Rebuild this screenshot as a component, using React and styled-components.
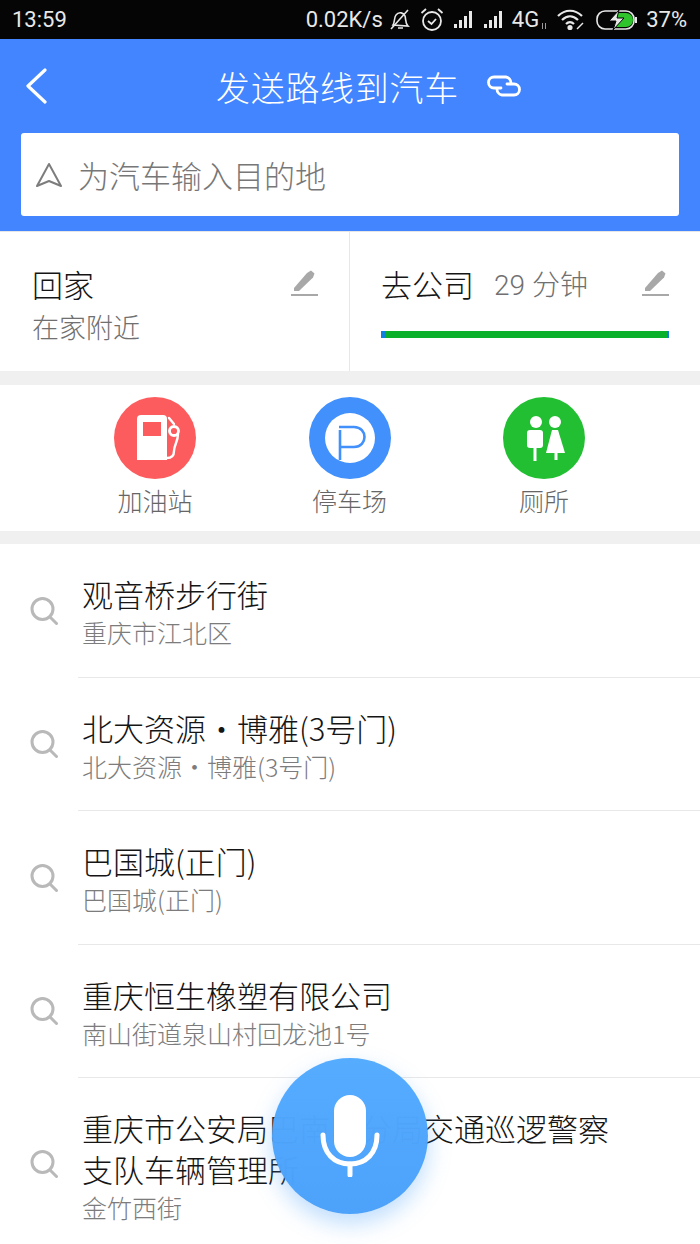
import React from 'react';
import styled, { createGlobalStyle } from 'styled-components';

const GlobalStyle = createGlobalStyle`
  html, body { margin: 0; padding: 0; background: #fff; }
  body { font-family: "Noto Sans CJK SC", "Noto Sans", sans-serif; }
`;

const Screen = styled.div`
  position: relative;
  width: 700px;
  height: 1244px;
  overflow: hidden;
  background: #fff;
`;

const StatusBar = styled.div`
  height: 39px;
  background: #050505;
  color: #e8e8e8;
  display: flex;
  align-items: center;
  justify-content: space-between;
  padding: 0 13px 0 12px;
  font-family: Roboto, sans-serif;
  font-size: 22px;
`;

const StatusRight = styled.div`
  display: flex;
  align-items: center;
`;

const StatusItem = styled.span`
  display: flex;
  align-items: center;
  margin-left: ${p => p.$ml || 0}px;
`;

const Header = styled.div`
  height: 192px;
  background: #4285fe;
  display: flex;
  flex-direction: column;
`;

const TitleRow = styled.div`
  height: 94px;
  position: relative;
  display: flex;
  align-items: center;
  padding-left: 216px;
  color: #fff;
`;

const BackIcon = styled.svg`
  position: absolute;
  left: 25px;
  top: 29px;
`;

const Title = styled.div`
  font-size: 34px;
  font-weight: 300;
  letter-spacing: 0.7px;
`;

const LinkIcon = styled.svg`
  margin-left: 27px;
`;

const SearchBox = styled.div`
  height: 83px;
  margin: 0 21px;
  border-radius: 3px;
  background: #fff;
  display: flex;
  align-items: center;
  padding-left: 15px;
  gap: 16px;
  color: #777;
  font-size: 31px;
  font-weight: 300;
`;

const Shortcuts = styled.div`
  height: 140px;
  display: flex;
  border-top: 1px solid #e6e6e6;
  box-sizing: border-box;
`;

const ShortcutCell = styled.div`
  width: ${p => p.$width}px;
  box-sizing: border-box;
  padding: 31px 31px 0 ${p => p.$left}px;
  border-left: ${p => (p.$divided ? '1px solid #e4e8ea' : 'none')};
`;

const ShortcutTop = styled.div`
  display: flex;
  align-items: center;
  height: 40px;
`;

const ShortcutName = styled.div`
  font-size: 31px;
  font-weight: 300;
  color: #151515;
`;

const Eta = styled.div`
  font-family: Roboto, "Noto Sans CJK SC", sans-serif;
  font-size: 28px;
  font-weight: 300;
  color: #707070;
  margin-left: 20px;
`;

const EditIcon = styled.svg`
  margin-left: auto;
`;

const ShortcutSub = styled.div`
  font-size: 27px;
  font-weight: 300;
  color: #707070;
  line-height: 38px;
  margin-top: 5px;
`;

const TrafficBar = styled.div`
  height: 7px;
  margin-top: 28px;
  background: linear-gradient(90deg, #1080e0 0 5px, #0bb02a 5px calc(100% - 2px), #1080e0 calc(100% - 2px));
`;

const Gap = styled.div`
  height: ${p => p.$h}px;
  background: #f0f0f0;
`;

const Categories = styled.div`
  height: 146px;
  display: grid;
  grid-template-columns: repeat(3, 194.5px);
  justify-content: center;
  padding-top: 12px;
  box-sizing: border-box;
  margin-left: -1px;
`;

const Category = styled.div`
  display: flex;
  flex-direction: column;
  align-items: center;
`;

const CategoryIcon = styled.svg`
  display: block;
`;

const CategoryLabel = styled.div`
  margin-top: 3px;
  font-size: 25px;
  font-weight: 300;
  line-height: 36px;
  color: #666;
`;

const Row = styled.div`
  display: flex;
  height: ${p => (p.$tall ? 172 : 133.5)}px;
  box-sizing: border-box;
`;

const SearchCell = styled.div`
  width: 78px;
  flex-shrink: 0;
  display: flex;
  align-items: center;
  padding-left: 30px;
  box-sizing: border-box;
`;

const RowBody = styled.div`
  flex: 1;
  padding: 29px 0 0 4px;
  border-bottom: ${p => (p.$last ? 'none' : '1px solid #e8e8e8')};
`;

const RowTitle = styled.div`
  font-size: 31px;
  font-weight: 300;
  line-height: 41px;
  color: #151515;
  width: 540px;
`;

const RowSub = styled.div`
  font-size: 25px;
  font-weight: 300;
  line-height: 34px;
  color: #7c7c7c;
  margin-top: 1px;
`;

const Fab = styled.div`
  position: absolute;
  left: 272px;
  top: 1058px;
  width: 156px;
  height: 156px;
  border-radius: 50%;
  background: linear-gradient(180deg, rgba(83, 171, 255, 0.985), rgba(74, 160, 250, 0.985));
  box-shadow: 0 10px 22px rgba(74, 160, 250, 0.35);
  display: flex;
  align-items: center;
  justify-content: center;
`;

const MicIcon = styled.svg`
  margin-top: -3px;
`;

const places = [
  { title: '观音桥步行街', sub: '重庆市江北区' },
  { title: '北大资源·博雅(3号门)', sub: '北大资源·博雅(3号门)' },
  { title: '巴国城(正门)', sub: '巴国城(正门)' },
  { title: '重庆恒生橡塑有限公司', sub: '南山街道泉山村回龙池1号' },
  { title: '重庆市公安局巴南区分局交通巡逻警察支队车辆管理所', sub: '金竹西街', tall: true },
];

const Edit = () => (
  <EditIcon width="27" height="26" viewBox="0 0 27 26">
    <path d="M3 18 L16 3 L20 0.5 L23.5 3.5 L22 7.5 L8 21 H3 Z" fill="#a8a8a8" />
    <rect x="0" y="24" width="27" height="2" fill="#a8a8a8" />
  </EditIcon>
);

const Magnifier = () => (
  <svg width="28" height="28" viewBox="0 0 28 28" fill="none" stroke="#b9b9b9" strokeWidth="3">
    <circle cx="12.5" cy="12" r="10.5" />
    <path d="M20 20 L26.5 26.5" strokeLinecap="round" />
  </svg>
);

const Signal = () => (
  <svg width="20" height="20" viewBox="0 0 20 20" fill="#e8e8e8">
    <rect x="0" y="14" width="3" height="4" />
    <rect x="5" y="10" width="3" height="8" />
    <rect x="10" y="6" width="3" height="12" />
    <rect x="15" y="1" width="3" height="17" />
  </svg>
);

export default function App() {
  return (
    <Screen>
      <GlobalStyle />
      <StatusBar>
        <span>13:59</span>
        <StatusRight>
          <span>0.02K/s</span>
          <StatusItem $ml={6}>
            <svg width="22" height="24" viewBox="0 0 22 24" fill="none" stroke="#e8e8e8" strokeWidth="1.6">
              <path d="M4 17 C6 14 5 9 7 7 C10 3 15 5 16 8 C17 11 16 15 19 18 Z" />
              <path d="M9 20 H14 M2 21 L19 2" />
            </svg>
          </StatusItem>
          <StatusItem $ml={9}>
            <svg width="24" height="26" viewBox="0 0 24 26" fill="none" stroke="#e8e8e8" strokeWidth="1.8">
              <circle cx="12" cy="14" r="9" />
              <path d="M8 14 L11.5 17 L16 12 M1.5 6 L6 2 M22.5 6 L18 2" />
            </svg>
          </StatusItem>
          <StatusItem $ml={10}><Signal /></StatusItem>
          <StatusItem $ml={10}><Signal /></StatusItem>
          <StatusItem $ml={8}>4G</StatusItem>
          <StatusItem $ml={2}>
            <svg width="6" height="22" viewBox="0 0 6 22" fill="none" stroke="#9a9a9a" strokeWidth="1">
              <path d="M1.5 14 V20 M4.5 14 V20" />
            </svg>
          </StatusItem>
          <StatusItem $ml={10}>
            <svg width="28" height="22" viewBox="0 0 28 22" fill="none" stroke="#e8e8e8" strokeWidth="2.2">
              <path d="M1 7 C8 0 18 0 25 7 M5 11 C10 6 16 6 21 11 M9 15 C11.5 12.5 14.5 12.5 17 15" />
              <circle cx="13" cy="18.5" r="1.5" fill="#e8e8e8" />
              <path d="M20 20 L26 14" strokeWidth="1.5" />
            </svg>
          </StatusItem>
          <StatusItem $ml={11}>
            <svg width="42" height="22" viewBox="0 0 42 22">
              <rect x="1" y="2" width="37" height="18" rx="8" fill="none" stroke="#e8e8e8" strokeWidth="1.6" />
              <path d="M22 4 H30 A7 7 0 0 1 30 18 H18 Z" fill="#2fc32c" />
              <path d="M23 1 L13 12 H20 L17 21 L28 9 H21 Z" fill="#e8e8e8" stroke="#050505" strokeWidth="1" />
              <rect x="39" y="8" width="2" height="6" fill="#e8e8e8" />
            </svg>
          </StatusItem>
          <StatusItem $ml={8}>37%</StatusItem>
        </StatusRight>
      </StatusBar>

      <Header>
        <TitleRow>
          <BackIcon width="24" height="36" viewBox="0 0 24 36" fill="none" stroke="#fff" strokeWidth="3.2" strokeLinecap="round" strokeLinejoin="round">
            <path d="M20 2 L3 18 L20 34" />
          </BackIcon>
          <Title>发送路线到汽车</Title>
          <LinkIcon width="36" height="24" viewBox="0 0 36 24" fill="none" stroke="#fff" strokeWidth="2.8" strokeLinecap="round">
            <path d="M15 14 H8 A5.5 5.5 0 0 1 8 3 H20 A6 6 0 0 1 25 9" />
            <path d="M21 10 H28 A5.5 5.5 0 0 1 28 21 H16 A6 6 0 0 1 11 15" />
          </LinkIcon>
        </TitleRow>
        <SearchBox>
          <svg width="26" height="26" viewBox="0 0 26 26" fill="none" stroke="#7d7d7d" strokeWidth="2" strokeLinejoin="round">
            <path d="M13 2 L25 24 L13 19 L1 24 Z" />
          </svg>
          为汽车输入目的地
        </SearchBox>
      </Header>

      <Shortcuts>
        <ShortcutCell $left={32} $width={349}>
          <ShortcutTop>
            <ShortcutName>回家</ShortcutName>
            <Edit />
          </ShortcutTop>
          <ShortcutSub>在家附近</ShortcutSub>
        </ShortcutCell>
        <ShortcutCell $left={31} $width={351} $divided>
          <ShortcutTop>
            <ShortcutName>去公司</ShortcutName>
            <Eta>29 分钟</Eta>
            <Edit />
          </ShortcutTop>
          <TrafficBar />
        </ShortcutCell>
      </Shortcuts>
      <Gap $h={14} />

      <Categories>
        <Category>
          <CategoryIcon width="82" height="82" viewBox="0 0 82 82">
            <circle cx="41" cy="41" r="41" fill="#fd5c5e" />
            <path d="M27 18 H49 A4 4 0 0 1 53 22 V63 H23 V22 A4 4 0 0 1 27 18 Z" fill="#fff" />
            <rect x="29" y="25" width="18" height="14" fill="#fd5c5e" />
            <path d="M55 21 L60 27 M64 37 C64 45 60 48 60 54 C60 59 57 61 53 61" fill="none" stroke="#fff" strokeWidth="2.4" strokeLinecap="round" />
            <circle cx="60" cy="34" r="4.5" fill="none" stroke="#fff" strokeWidth="2.8" />
          </CategoryIcon>
          <CategoryLabel>加油站</CategoryLabel>
        </Category>
        <Category>
          <CategoryIcon width="82" height="82" viewBox="0 0 82 82">
            <circle cx="41" cy="41" r="41" fill="#4190fb" />
            <circle cx="41" cy="41" r="25" fill="#fff" />
            <path d="M31 33 V63 M30 30 H45 C59 30 59 50 45 50 H31" fill="none" stroke="#4190fb" strokeWidth="2.6" />
          </CategoryIcon>
          <CategoryLabel>停车场</CategoryLabel>
        </Category>
        <Category>
          <CategoryIcon width="82" height="82" viewBox="0 0 82 82" fill="#fff">
            <circle cx="41" cy="41" r="41" fill="#22bf33" />
            <circle cx="33" cy="25" r="6" />
            <circle cx="52" cy="25" r="6" />
            <rect x="24" y="33" width="16" height="18" rx="3" />
            <rect x="30.5" y="48" width="3" height="16" />
            <path d="M49 33 H55 L62 56 H43 Z" />
            <rect x="51.5" y="54" width="3" height="9" />
          </CategoryIcon>
          <CategoryLabel>厕所</CategoryLabel>
        </Category>
      </Categories>
      <Gap $h={13} />

      {places.map(p => (
        <Row key={p.title} $tall={p.tall}>
          <SearchCell>
            <Magnifier />
          </SearchCell>
          <RowBody $last={p.tall}>
            <RowTitle>{p.title}</RowTitle>
            <RowSub>{p.sub}</RowSub>
          </RowBody>
        </Row>
      ))}

      <Fab>
        <MicIcon width="60" height="84" viewBox="0 0 60 84" fill="none">
          <rect x="14" y="2" width="32" height="62" rx="16" fill="#fff" />
          <path d="M3 42 C3 60 14 71 30 71 C46 71 57 60 57 42" stroke="#fff" strokeWidth="5" strokeLinecap="round" />
          <path d="M30 71 V82" stroke="#fff" strokeWidth="5" strokeLinecap="round" />
        </MicIcon>
      </Fab>
    </Screen>
  );
}
